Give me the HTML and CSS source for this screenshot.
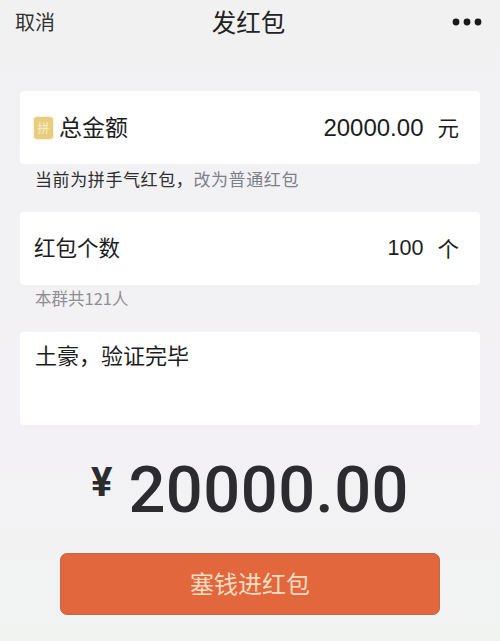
FILE: index.html
```html
<!DOCTYPE html>
<html lang="zh">
<head>
<meta charset="utf-8">
<title>发红包</title>
<link rel="stylesheet" href="styles.css">
</head>
<body>
<div class="page">
  <header class="nav">
    <span class="nav-cancel">取消</span>
    <span class="nav-title">发红包</span>
    <svg class="nav-more" width="30" height="8" viewBox="0 0 30 8"><circle cx="4" cy="4" r="3.4"/><circle cx="15" cy="4" r="3.4"/><circle cx="26" cy="4" r="3.4"/></svg>
  </header>
  <section class="card card-total">
    <div class="label-group">
      <span class="pin"><span class="pin-text">拼</span></span>
      <span class="label">总金额</span>
    </div>
    <div class="value"><span class="value-big">20000.00</span><span class="unit">元</span></div>
  </section>
  <p class="hint hint-dark">当前为拼手气红包，<span class="hint-link">改为普通红包</span></p>
  <section class="card card-count">
    <span class="label">红包个数</span>
    <div class="value"><span>100</span><span class="unit">个</span></div>
  </section>
  <p class="hint hint-grey">本群共121人</p>
  <section class="message">土豪，验证完毕</section>
  <div class="amount"><span class="yen">¥</span><span class="sum">20000.00</span></div>
  <button class="submit">塞钱进红包</button>
</div>
</body>
</html>
```
FILE: styles.css
```css
* { box-sizing: border-box; }
html, body { margin: 0; padding: 0; }
body {
  width: 500px;
  height: 641px;
  overflow: hidden;
  background: #f1f1f3;
  font-family: "Noto Sans CJK SC", "Liberation Sans", sans-serif;
  color: #1c1c1e;
}
.page {
  display: flex;
  flex-direction: column;
  height: 641px;
  padding: 0 20px;
  background: linear-gradient(#f1f1f2, #f3f1f5 70%, #f1f3f1);
}
.nav {
  display: grid;
  grid-template-columns: 1fr auto 1fr;
  align-items: center;
  height: 44px;
  margin: 0 -2px 0 -5px;
}
.nav-cancel { font-size: 20px; line-height: 44px; color: #333; }
.nav-title { font-size: 24.5px; line-height: 44px; color: #222; font-weight: 400; }
.nav-more { fill: #1a1a1a; justify-self: end; }
.card {
  display: flex;
  align-items: center;
  justify-content: space-between;
  background: #fff;
  border-radius: 4px;
  font-size: 21.5px;
  height: 73px;
  padding: 0 21px 0 14px;
}
.card-total { margin-top: 47px; font-size: 23px; }
.label-group { display: flex; align-items: center; gap: 6px; }
.label { padding-bottom: 4px; }
.pin {
  display: flex;
  align-items: center;
  justify-content: center;
  width: 19px;
  height: 22px;
  border-radius: 3px;
  background: #e9cd7e;
  box-shadow: 0 0 3px #f5e6a8;
}
.pin-text { font-size: 12px; line-height: 1; color: #f6eecb; }
.value {
  display: flex;
  align-items: center;
  gap: 14px;
  font-size: 21.5px;
  font-family: "Liberation Sans", "Noto Sans CJK SC", sans-serif;
}
.value-big { font-size: 24px; }
.unit { font-family: "Noto Sans CJK SC", sans-serif; padding-bottom: 2px; }
.hint { margin: 0; padding-left: 15px; font-size: 17px; line-height: 30px; height: 48px; }
.hint-dark { color: #2e2e30; letter-spacing: 0.6px; }
.hint-link { color: #7d8088; }
.hint-grey { color: #8e8e92; height: 47px; font-size: 16.5px; line-height: 27px; }
.message {
  background: #fff;
  border-radius: 4px;
  height: 93px;
  padding: 6px 15px;
  font-size: 22px;
  line-height: 32px;
}
.amount {
  display: flex;
  align-items: flex-start;
  justify-content: center;
  gap: 16px;
  margin-top: 23px;
  height: 84px;
  color: #2b2b30;
  font-family: Roboto, "Liberation Sans", sans-serif;
  font-weight: 500;
}
.yen { font-size: 40px; line-height: 70px; font-weight: 700; }
.sum { font-size: 65px; line-height: 84px; letter-spacing: 0.5px; }
.submit {
  display: block;
  align-self: center;
  width: 380px;
  height: 62px;
  margin-top: 21px;
  padding-bottom: 4px;
  border: 1px solid #bd6a4e;
  border-radius: 7px;
  background: #e2673d;
  color: #fadcc0;
  font-family: inherit;
  font-size: 24px;
}
```
